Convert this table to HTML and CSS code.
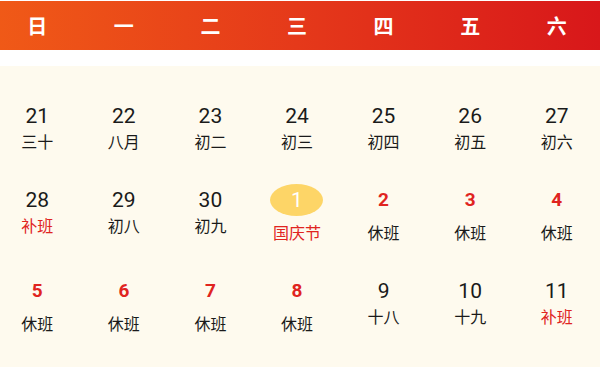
FILE: index.html
```html
<!DOCTYPE html>
<html lang="zh">
<head>
<meta charset="utf-8">
<link rel="stylesheet" href="styles.css">
</head>
<body>
<div class="cal">
  <div class="head">
    <div class="wd">日</div><div class="wd">一</div><div class="wd">二</div><div class="wd">三</div><div class="wd">四</div><div class="wd">五</div><div class="wd">六</div>
  </div>
  <div class="gap"></div>
  <div class="body">
    <div class="grid">
      <div class="cell"><div class="num">21</div><div class="sub">三十</div></div>
      <div class="cell"><div class="num">22</div><div class="sub">八月</div></div>
      <div class="cell"><div class="num">23</div><div class="sub">初二</div></div>
      <div class="cell"><div class="num">24</div><div class="sub">初三</div></div>
      <div class="cell"><div class="num">25</div><div class="sub">初四</div></div>
      <div class="cell"><div class="num">26</div><div class="sub">初五</div></div>
      <div class="cell"><div class="num">27</div><div class="sub">初六</div></div>

      <div class="cell"><div class="num">28</div><div class="sub red">补班</div></div>
      <div class="cell"><div class="num">29</div><div class="sub">初八</div></div>
      <div class="cell"><div class="num">30</div><div class="sub">初九</div></div>
      <div class="cell hol"><div class="num today">1</div><div class="sub red">国庆节</div></div>
      <div class="cell hol"><div class="num">2</div><div class="sub">休班</div></div>
      <div class="cell hol"><div class="num">3</div><div class="sub">休班</div></div>
      <div class="cell hol"><div class="num">4</div><div class="sub">休班</div></div>

      <div class="cell hol"><div class="num">5</div><div class="sub">休班</div></div>
      <div class="cell hol"><div class="num">6</div><div class="sub">休班</div></div>
      <div class="cell hol"><div class="num">7</div><div class="sub">休班</div></div>
      <div class="cell hol"><div class="num">8</div><div class="sub">休班</div></div>
      <div class="cell"><div class="num">9</div><div class="sub">十八</div></div>
      <div class="cell"><div class="num">10</div><div class="sub">十九</div></div>
      <div class="cell"><div class="num">11</div><div class="sub red">补班</div></div>
    </div>
  </div>
</div>
</body>
</html>
```
FILE: styles.css
```css
html, body {
  margin: 0;
  padding: 0;
  background: #ffffff;
  overflow: hidden;
}
.cal {
  width: 600px;
  height: 367px;
  display: flex;
  flex-direction: column;
  font-family: Roboto, "Noto Sans CJK SC", sans-serif;
  color: #1a1a1a;
}
.head {
  height: 49px;
  margin-top: 1px;
  display: grid;
  grid-template-columns: repeat(7, 1fr);
  width: 606px;
  margin-left: -6px;
  align-items: center;
  background: linear-gradient(90deg, #f05a17 0%, #e5391a 50%, #d8171a 100%);
}
.wd {
  text-align: center;
  color: #ffffff;
  font-family: "Noto Sans CJK SC", sans-serif;
  font-weight: 700;
  font-size: 20px;
  line-height: 24px;
}
.gap {
  height: 16px;
}
.body {
  flex: 1;
  background: #fefaee;
  padding-top: 18px;
}
.grid {
  width: 606px;
  margin-left: -6px;
  display: grid;
  grid-template-columns: repeat(7, 1fr);
  align-items: start;
}
.cell {
  padding: 16px 0 17px;
  display: flex;
  flex-direction: column;
  align-items: center;
}
.num {
  height: 32px;
  line-height: 32px;
  font-size: 21px;
  text-align: center;
}
.sub {
  font-family: "Noto Sans CJK SC", sans-serif;
  font-size: 16px;
  line-height: 20px;
  margin-top: -1px;
}
.red {
  color: #e0241f;
}
.hol .num {
  font-weight: 700;
  font-size: 19px;
  color: #e0241f;
}
.hol .sub {
  margin-top: 6px;
}
.hol .num.today {
  width: 53px;
  border-radius: 50%;
  background: #fdd567;
  color: #ffffff;
  font-weight: 400;
  font-size: 21px;
}
```
